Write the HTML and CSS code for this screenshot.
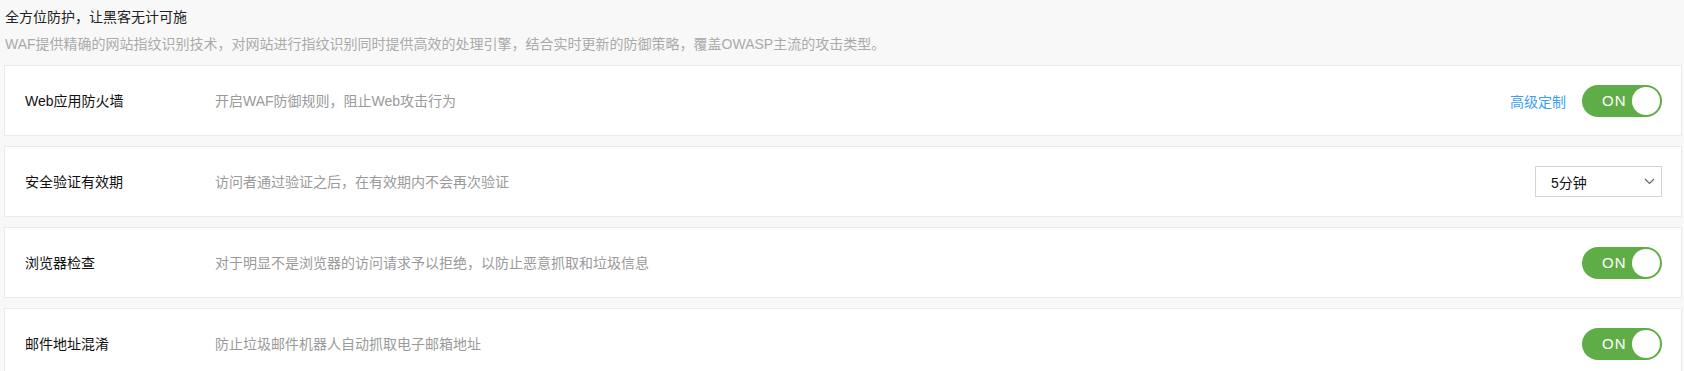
FILE: index.html
```html
<!DOCTYPE html>
<html lang="zh-CN">
<head>
    <meta charset="UTF-8">
    <title>WAF</title>
    <link rel="stylesheet" href="styles.css">
</head>
<body>
    <div class="page">
        <div class="intro">
            <h1>全方位防护，让黑客无计可施</h1>
            <p>WAF提供精确的网站指纹识别技术，对网站进行指纹识别同时提供高效的处理引擎，结合实时更新的防御策略，覆盖OWASP主流的攻击类型。</p>
        </div>

        <div class="item">
            <div class="item-name">Web应用防火墙</div>
            <div class="item-desc">开启WAF防御规则，阻止Web攻击行为</div>
            <div class="item-action">
                <a class="link" href="#">高级定制</a>
                <span class="switch"><span class="switch-text">ON</span><span class="knob"></span></span>
            </div>
        </div>

        <div class="item">
            <div class="item-name">安全验证有效期</div>
            <div class="item-desc">访问者通过验证之后，在有效期内不会再次验证</div>
            <div class="item-action">
                <div class="select">
                    <span>5分钟</span>
                    <svg width="11" height="7" viewBox="0 0 11 7"><polyline points="1,1 5.5,5.5 10,1" fill="none" stroke="#666" stroke-width="1.2"/></svg>
                </div>
            </div>
        </div>

        <div class="item">
            <div class="item-name">浏览器检查</div>
            <div class="item-desc">对于明显不是浏览器的访问请求予以拒绝，以防止恶意抓取和垃圾信息</div>
            <div class="item-action">
                <span class="switch"><span class="switch-text">ON</span><span class="knob"></span></span>
            </div>
        </div>

        <div class="item">
            <div class="item-name">邮件地址混淆</div>
            <div class="item-desc">防止垃圾邮件机器人自动抓取电子邮箱地址</div>
            <div class="item-action">
                <span class="switch"><span class="switch-text">ON</span><span class="knob"></span></span>
            </div>
        </div>
    </div>
</body>
</html>
```

FILE: styles.css
```css
body {
    margin: 0;
    padding: 0;
    background-color: #f8f8f8;
    font-family: "Liberation Sans", "Noto Sans CJK SC", sans-serif;
    font-size: 14px;
    color: #222;
}

.page {
    padding: 7px 2px 0 4px;
}

.intro h1 {
    margin: 0 0 0 1px;
    font-size: 14px;
    font-weight: normal;
    line-height: 20px;
    color: #222;
}

.intro p {
    margin: 7px 0 0 1px;
    font-size: 14px;
    line-height: 20px;
    color: #aaa;
}

.item {
    height: 71px;
    box-sizing: border-box;
    margin-top: 10px;
    background: #fff;
    border: 1px solid #ebebeb;
    display: flex;
    align-items: center;
    padding: 0 19px 0 20px;
}

.intro + .item {
    margin-top: 11px;
}

.item-name {
    width: 190px;
    flex-shrink: 0;
    color: #111;
    line-height: 20px;
}

.item-desc {
    flex: 1;
    color: #9a9a9a;
    line-height: 20px;
}

.item-action {
    display: flex;
    align-items: center;
    gap: 16px;
}

.link {
    color: #3a9ff0;
    text-decoration: none;
}

.switch {
    position: relative;
    width: 80px;
    height: 32px;
    border-radius: 16px;
    background: #5fad46;
    display: flex;
    align-items: center;
}

.switch-text {
    margin-left: 20px;
    color: #fff;
    font-size: 15px;
    letter-spacing: 1px;
}

.knob {
    position: absolute;
    top: 2px;
    right: 2px;
    width: 28px;
    height: 28px;
    border-radius: 50%;
    background: #fff;
}

.select {
    width: 127px;
    height: 31px;
    box-sizing: border-box;
    border: 1px solid #d4d4d4;
    background: #fff;
    display: flex;
    align-items: center;
    justify-content: space-between;
    padding: 0 6px 0 15px;
    color: #111;
}
```
